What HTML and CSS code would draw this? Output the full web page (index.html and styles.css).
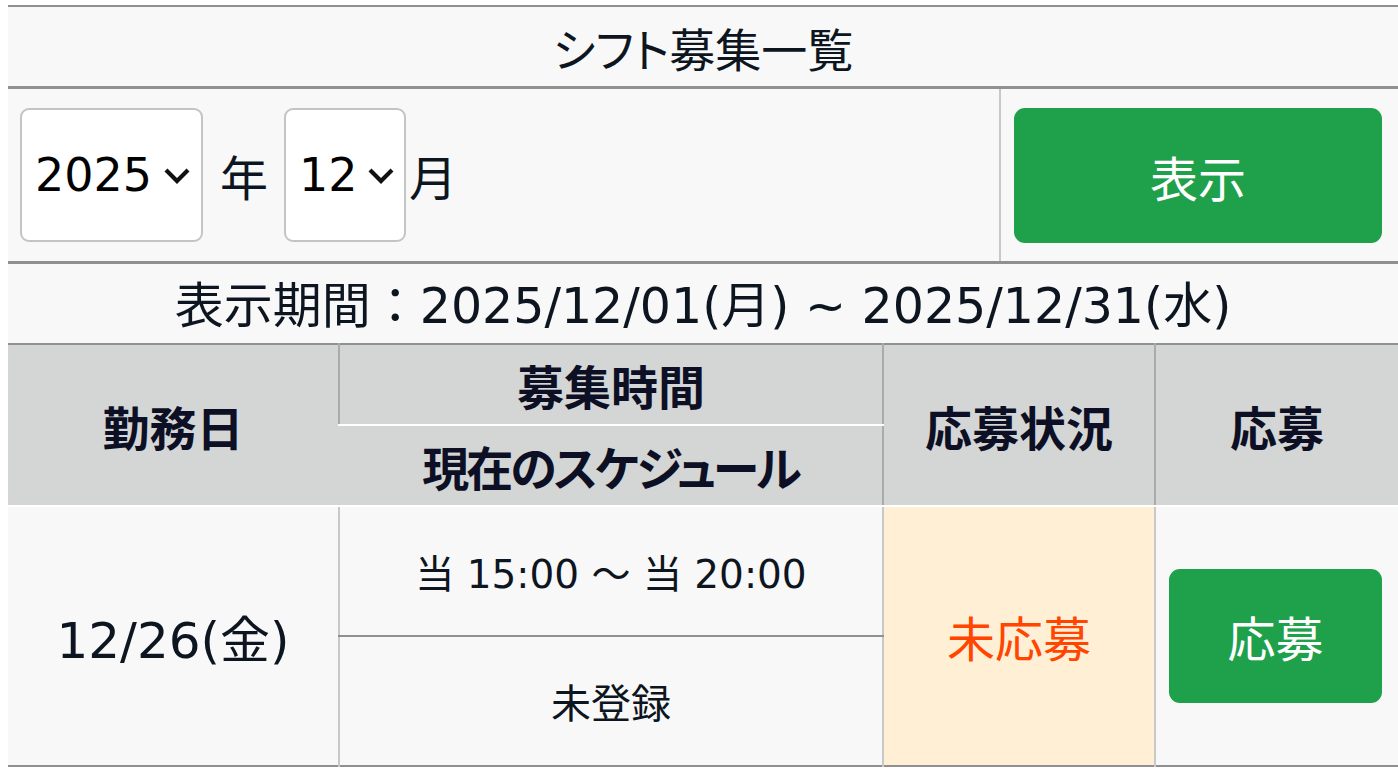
FILE: index.html
```html
<!DOCTYPE html>
<html lang="ja">
<head>
<meta charset="utf-8">
<title>シフト募集一覧</title>
<link rel="stylesheet" href="styles.css">
</head>
<body>
<div class="page">
  <h1 class="title">シフト募集一覧</h1>
  <form class="search">
    <div class="search-left">
      <div class="select-wrap select-year">
        <select class="select"><option>2025</option></select>
        <svg class="chev" viewBox="0 0 28 18" width="28" height="18"><path d="M3 3 L14 14 L25 3" fill="none" stroke="#111" stroke-width="4.2"/></svg>
      </div>
      <span class="unit unit-year">年</span>
      <div class="select-wrap select-month">
        <select class="select"><option>12</option></select>
        <svg class="chev" viewBox="0 0 28 18" width="28" height="18"><path d="M3 3 L14 14 L25 3" fill="none" stroke="#111" stroke-width="4.2"/></svg>
      </div>
      <span class="unit unit-month">月</span>
    </div>
    <div class="search-right">
      <button type="button" class="btn btn-show">表示</button>
    </div>
  </form>
  <div class="period">表示期間：2025/12/01(月) ~ 2025/12/31(水)</div>
  <table class="shifts">
    <colgroup>
      <col class="c1"><col class="c2"><col class="c3"><col class="c4">
    </colgroup>
    <thead>
      <tr>
        <th rowspan="2">勤務日</th>
        <th class="sub-top">募集時間</th>
        <th rowspan="2">応募状況</th>
        <th rowspan="2">応募</th>
      </tr>
      <tr>
        <th class="sub-bottom">現在のスケジュール</th>
      </tr>
    </thead>
    <tbody>
      <tr>
        <td rowspan="2" class="date">12/26(金)</td>
        <td class="time">当 15:00 ～ 当 20:00</td>
        <td rowspan="2" class="status">未応募</td>
        <td rowspan="2" class="apply"><button type="button" class="btn btn-apply">応募</button></td>
      </tr>
      <tr>
        <td class="sched">未登録</td>
      </tr>
    </tbody>
  </table>
</div>
</body>
</html>
```

FILE: styles.css
```css
html, body {
  margin: 0;
  padding: 0;
  background: #ffffff;
}
body {
  padding: 5px 0 0 8px;
  font-family: "DejaVu Sans", "Noto Sans CJK JP", sans-serif;
  color: #0d1520;
}
.page {
  background: #f8f8f8;
  border-top: 2px solid #909090;
}
.title {
  margin: 0;
  height: 79px;
  display: flex;
  align-items: center;
  justify-content: center;
  font-size: 46px;
  font-weight: 400;
  font-feature-settings: "palt";
  border-bottom: 3px solid #909090;
}
.search {
  display: flex;
  height: 172px;
  border-bottom: 3px solid #909090;
  margin: 0;
}
.search-left {
  flex: 1;
  display: flex;
  align-items: center;
  padding-left: 12px;
}
.select-wrap {
  position: relative;
  height: 134px;
}
.select {
  appearance: none;
  -webkit-appearance: none;
  height: 134px;
  border: 2px solid #c4c4c4;
  border-radius: 9px;
  background: #ffffff;
  font-family: inherit;
  font-size: 46px;
  color: #000;
  padding: 0 0 0 13px;
  margin: 0;
}
.select-year .select { width: 183px; }
.select-month .select { width: 122px; }
.chev {
  position: absolute;
  top: 59px;
  pointer-events: none;
}
.select-year .chev { left: 143px; }
.select-month .chev { left: 83px; }
.unit {
  font-size: 48px;
}
.unit-year {
  margin: 0 16px 0 17px;
}
.unit-month {
  margin-left: 3px;
}
.search-right {
  width: 399px;
  border-left: 2px solid #c8c8c8;
  padding: 19px 16px 18px 13px;
  box-sizing: border-box;
  display: flex;
}
.btn {
  border: none;
  background: #1fa04a;
  color: #ffffff;
  font-family: inherit;
  border-radius: 11px;
  cursor: pointer;
}
.btn-show {
  flex: 1;
  font-size: 48px;
}
.period {
  height: 79px;
  box-sizing: border-box;
  padding-bottom: 5px;
  display: flex;
  align-items: center;
  justify-content: center;
  font-size: 49px;
}
.shifts {
  width: 100%;
  border-collapse: collapse;
  border-top: 2px solid #909090;
  border-bottom: 2px solid #909090;
  table-layout: fixed;
}
.c1 { width: 331px; }
.c2 { width: 544px; }
.c3 { width: 272px; }
.c4 { width: 243px; }
.shifts th {
  background: #d4d6d6;
  font-size: 47px;
  font-weight: 700;
  font-feature-settings: "palt";
  color: #0d1025;
  border-left: 2px solid #aaaaaa;
  border-bottom: 2px solid #ffffff;
  padding: 0;
}
.shifts th:first-child { border-left: none; }
.shifts thead tr:first-child th { height: 79px; }
.shifts th.sub-bottom {
  height: 79px;
  letter-spacing: -3px;
}
.shifts td {
  border-left: 2px solid #c8c8c8;
  text-align: center;
  padding: 0;
  color: #0d1520;
}
.shifts td.date { border-left: none; font-size: 50px; }
.shifts td.time {
  height: 128px;
  font-size: 39px;
  border-bottom: 2px solid #909090;
}
.shifts td.sched {
  height: 128px;
  font-size: 40px;
}
.shifts td.status {
  background: #ffefd5;
  color: #ff4500;
  font-size: 48px;
}
.shifts td.apply {
  padding: 0 16px 0 13px;
}
.btn-apply {
  width: 100%;
  height: 134px;
  font-size: 48px;
}
```
